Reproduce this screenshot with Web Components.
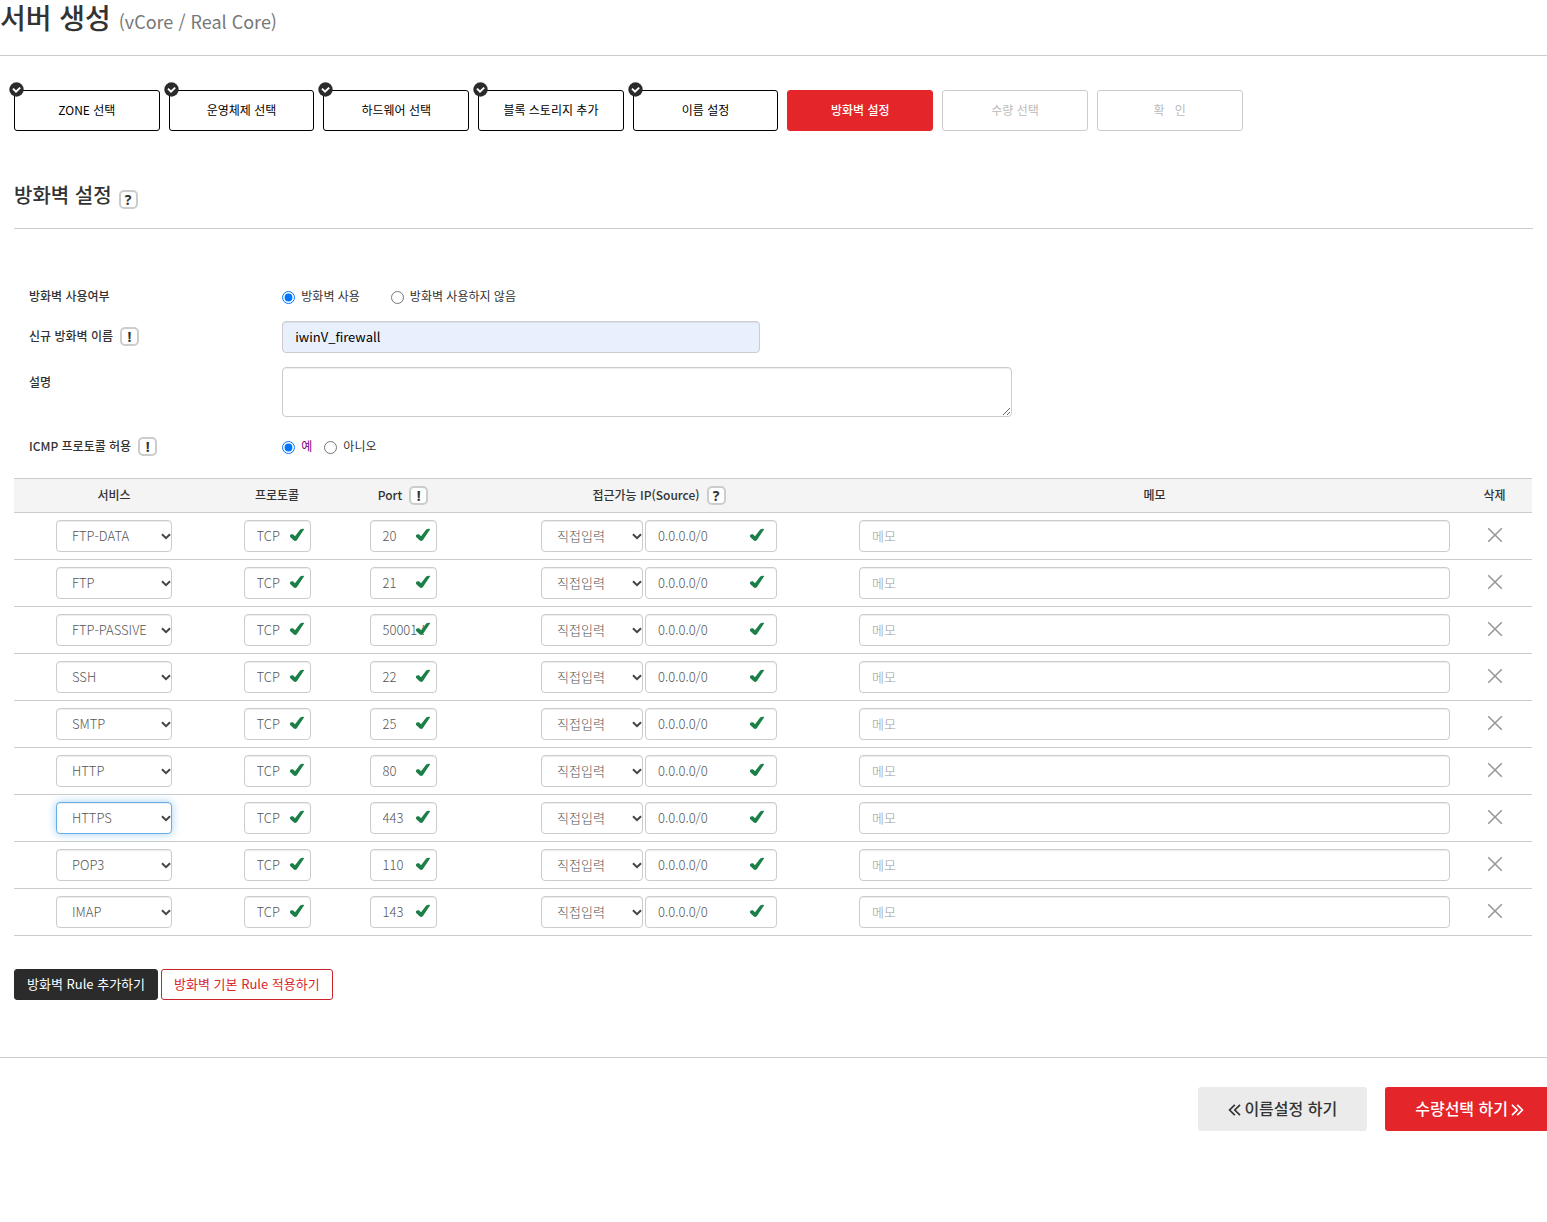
<!DOCTYPE html>
<html lang="ko">
<head>
<meta charset="utf-8">
<meta name="viewport" content="width=device-width, initial-scale=1">
<title>서버 생성</title>
<style>
  body {
    margin: 0;
    font-family: "Noto Sans CJK KR", "Noto Sans", sans-serif;
    font-size: 12px;
    line-height: 18px;
    color: #333;
    background-color: #fff;
  }
</style>
</head>
<body>
<server-create></server-create>

<script>
// bootstrap-like look shared by every text box and drop-down
const controlStyle = `
  * { box-sizing: border-box; }
  .control {
    height: 32px;
    margin: 0;
    padding: 0 12px 2px;
    border: 1px solid #ccc;
    border-radius: 4px;
    background-color: #fff;
    box-shadow: inset 0 1px 1px rgba(0,0,0,.075);
    color: #555;
    font-family: inherit;
    font-size: 13px;
    font-weight: 300;
  }
  .control::placeholder { color: #999; opacity: 1; }
  .control:focus, .control.active {
    outline: 0;
    border-color: #66afe9;
    box-shadow: inset 0 1px 1px rgba(0,0,0,.075), 0 0 8px rgba(102,175,233,.6);
  }
  select.control {
    appearance: none;
    padding: 0 12px 2px 15px;
    background-image: url("data:image/svg+xml,%3Csvg xmlns='http://www.w3.org/2000/svg' width='10' height='7' viewBox='0 0 10 7'%3E%3Cpath d='M1 1.2l4 4 4-4' fill='none' stroke='%23444' stroke-width='2'/%3E%3C/svg%3E");
    background-repeat: no-repeat;
    background-position: right center;
  }
`;

class PageHeader extends HTMLElement {
  connectedCallback() {
    this.attachShadow({ mode: "open" }).innerHTML = `
      <style>
        :host { display: block; height: 55px; border-bottom: 1px solid #ccc; }
        h1 {
          margin: 0;
          font-size: 28px;
          font-weight: 500;
          line-height: 34px;
        }
        small { font-size: 18px; font-weight: 400; color: #777; }
      </style>
      <h1><slot></slot> <small><slot name="sub"></slot></small></h1>`;
  }
}
customElements.define("page-header", PageHeader);

class StepItem extends HTMLElement {
  connectedCallback() {
    this.attachShadow({ mode: "open" }).innerHTML = `
      <style>
        :host {
          display: block;
          position: relative;
          box-sizing: border-box;
          height: 41px;
          border: 1px solid #ccc;
          border-radius: 3px;
          color: #bbb;
          line-height: 38px;
          text-align: center;
          white-space: nowrap;
        }
        :host([state="done"]) { border-color: #000; color: #000; }
        :host([state="current"]) {
          border-color: #e4252a;
          background-color: #e4252a;
          color: #fff;
          font-weight: 500;
        }
        svg { display: none; position: absolute; left: -6px; top: -9px; }
        :host([state="done"]) svg { display: block; }
      </style>
      <svg width="15" height="15" viewBox="0 0 15 15">
        <circle cx="7.5" cy="7.5" r="7.2" fill="#2b2b2b"/>
        <path d="M4 6.6l3 3 4.2-4" fill="none" stroke="#fff" stroke-width="2"/>
      </svg>
      <slot></slot>`;
  }
}
customElements.define("step-item", StepItem);

class StepBar extends HTMLElement {
  connectedCallback() {
    this.attachShadow({ mode: "open" }).innerHTML = `
      <style>
        :host {
          display: grid;
          grid-template-columns: repeat(8, 10vw);
          padding: 34px 0 0 14px;
        }
        ::slotted(*) { margin-right: 9px; }
      </style>
      <slot></slot>`;
  }
}
customElements.define("step-bar", StepBar);

// small rounded "?" / "!" hint
class HelpBadge extends HTMLElement {
  connectedCallback() {
    this.attachShadow({ mode: "open" }).innerHTML = `
      <style>
        :host { display: inline-block; vertical-align: middle; }
        button {
          display: block;
          box-sizing: border-box;
          width: 19px;
          height: 19px;
          padding: 0;
          border: 2px solid #ccc;
          border-radius: 5px;
          background-color: #fff;
          color: #333;
          font-family: "Noto Sans", sans-serif;
          font-size: 14px;
          font-weight: 700;
          line-height: 15px;
          text-align: center;
        }
      </style>
      <button type="button"><slot></slot></button>`;
  }
}
customElements.define("help-badge", HelpBadge);

class SectionTitle extends HTMLElement {
  connectedCallback() {
    this.attachShadow({ mode: "open" }).innerHTML = `
      <style>
        :host { display: block; border-bottom: 1px solid #ccc; padding-bottom: 19px; }
        h2 {
          display: flex;
          align-items: flex-end;
          gap: 7px;
          margin: 0;
          font-size: 20px;
          font-weight: 500;
          line-height: 28px;
        }
      </style>
      <h2><slot></slot><slot name="help"></slot></h2>`;
  }
}
customElements.define("section-title", SectionTitle);

class FormRow extends HTMLElement {
  connectedCallback() {
    this.attachShadow({ mode: "open" }).innerHTML = `
      <style>
        :host { --row-height: 30px; display: flex; align-items: flex-start; }
        :host([compact]) { --row-height: 23px; }
        .label {
          flex: 0 0 17%;
          display: flex;
          align-items: center;
          gap: 7px;
          min-height: var(--row-height);
          font-weight: 500;
        }
        .field { flex: 1; display: flex; align-items: center; min-height: var(--row-height); }
      </style>
      <div class="label"><slot name="label"></slot></div>
      <div class="field"><slot></slot></div>`;
  }
}
customElements.define("form-row", FormRow);

class FirewallForm extends HTMLElement {
  connectedCallback() {
    this.attachShadow({ mode: "open" }).innerHTML = `
      <style>
        ${controlStyle}
        :host { display: block; padding: 0 14px 0 15px; }
        form { display: flex; flex-direction: column; gap: 14px; }
        .choices { display: flex; gap: 31px; }
        .choices.tight { gap: 12px; }
        .choices label { display: flex; align-items: center; gap: 6px; }
        input[type=radio] { width: 13px; height: 13px; margin: 3px 0 0; }
        #name {
          width: 38.6%;
          background-color: #e8f0fe;
          color: #000;
          font-weight: 400;
        }
        textarea.control { display: block; width: 59%; height: 50px; }
        .on { color: #800080; }
      </style>
      <form>
        <form-row compact>
          <span slot="label">방화벽 사용여부</span>
          <div class="choices">
            <label><input type="radio" name="use" checked>방화벽 사용</label>
            <label><input type="radio" name="use">방화벽 사용하지 않음</label>
          </div>
        </form-row>
        <form-row>
          <label slot="label" for="name">신규 방화벽 이름</label>
          <help-badge slot="label">!</help-badge>
          <input class="control" id="name" type="text" value="iwinV_firewall">
        </form-row>
        <form-row>
          <label slot="label" for="desc">설명</label>
          <textarea class="control" id="desc"></textarea>
        </form-row>
        <form-row>
          <span slot="label">ICMP 프로토콜 허용</span>
          <help-badge slot="label">!</help-badge>
          <div class="choices tight">
            <label><input type="radio" name="icmp" checked><span class="on">예</span></label>
            <label><input type="radio" name="icmp">아니오</label>
          </div>
        </form-row>
      </form>`;
  }
}
customElements.define("firewall-form", FirewallForm);

// text box with the green "valid" tick lying over its right end
class CheckedInput extends HTMLElement {
  connectedCallback() {
    this.attachShadow({ mode: "open" }).innerHTML = `
      <style>
        ${controlStyle}
        :host { display: inline-block; position: relative; width: 67px; vertical-align: top; text-align: left; }
        :host([wide]) { width: 132px; }
        .control { display: block; width: 100%; }
        svg { position: absolute; right: 6px; top: 8px; }
        :host([wide]) svg { right: 12px; }
      </style>
      <input class="control" type="text" value="${this.getAttribute("value")}" aria-label="${this.getAttribute("label")}">
      <svg width="16" height="14" viewBox="0 0 16 14">
        <path d="M.9 7.6Q1.8 5.8 4 6.3L6 8.2 11.2 1.4Q13.4.2 15.3 1L7.8 12.2Q6.2 13.6 4.6 12.2L1.1 8.9z" fill="#1c7f48"/>
      </svg>`;
  }
}
customElements.define("checked-input", CheckedInput);

const rules = [
  ["FTP-DATA", "20"],
  ["FTP", "21"],
  ["FTP-PASSIVE", "50001-50005"],
  ["SSH", "22"],
  ["SMTP", "25"],
  ["HTTP", "80"],
  ["HTTPS", "443"],
  ["POP3", "110"],
  ["IMAP", "143"]
];

class RuleTable extends HTMLElement {
  connectedCallback() {
    this.attachShadow({ mode: "open" }).innerHTML = `
      <style>
        ${controlStyle}
        :host { display: block; padding-right: 1px; }
        table {
          width: 100%;
          table-layout: fixed;
          border-collapse: collapse;
          border-top: 1px solid #ccc;
        }
        tr { border-bottom: 1px solid #ccc; }
        th {
          height: 34px;
          padding: 0 0 2px;
          background-color: #f4f4f4;
          font-weight: 500;
        }
        .head { display: flex; align-items: center; justify-content: center; gap: 7px; }
        .head help-badge { padding-top: 2px; }
        td { padding: 7px; text-align: center; line-height: 0; }
        .service { width: 116px; }
        .ip { display: flex; justify-content: center; gap: 2px; }
        .ip select { width: 102px; }
        .memo { width: 100%; }
        .delete {
          padding: 0 0 2px;
          border: 0;
          background: none;
          line-height: 0;
          cursor: pointer;
        }
        col.service-col { width: 200px; }
        col.small-col { width: 126px; }
        col.ip-col { width: 386px; }
        col.delete-col { width: 75px; }
      </style>
      <table>
        <colgroup>
          <col class="service-col"><col class="small-col"><col class="small-col">
          <col class="ip-col"><col><col class="delete-col">
        </colgroup>
        <thead>
          <tr>
            <th>서비스</th>
            <th>프로토콜</th>
            <th><div class="head">Port <help-badge>!</help-badge></div></th>
            <th><div class="head">접근가능 IP(Source) <help-badge>?</help-badge></div></th>
            <th>메모</th>
            <th>삭제</th>
          </tr>
        </thead>
        <tbody>${rules.map(r => this.row(r)).join("")}</tbody>
      </table>`;
  }

  row([service, port]) {
    const options = rules.map(([name]) => `<option${name === service ? " selected" : ""}>${name}</option>`).join("");
    return `
      <tr>
        <td><select class="control service${service === "HTTPS" ? " active" : ""}" aria-label="서비스">${options}</select></td>
        <td><checked-input value="TCP" label="프로토콜"></checked-input></td>
        <td><checked-input value="${port}" label="Port"></checked-input></td>
        <td>
          <div class="ip">
            <select class="control" aria-label="접근가능 IP"><option>직접입력</option></select>
            <checked-input wide value="0.0.0.0/0" label="Source"></checked-input>
          </div>
        </td>
        <td><input class="control memo" type="text" placeholder="메모" aria-label="메모"></td>
        <td>
          <button class="delete" type="button" aria-label="삭제">
            <svg width="16" height="16" viewBox="0 0 16 16"><path d="M1.2 1.2l13.6 13.6M14.8 1.2L1.2 14.8" stroke="#999" stroke-width="1.6"/></svg>
          </button>
        </td>
      </tr>`;
  }
}
customElements.define("rule-table", RuleTable);

class RuleButton extends HTMLElement {
  connectedCallback() {
    this.attachShadow({ mode: "open" }).innerHTML = `
      <style>
        :host { display: block; }
        button {
          display: block;
          height: 31px;
          padding: 0 12px 2px;
          border: 1px solid #2b2b2b;
          border-radius: 3px;
          background-color: #2b2b2b;
          color: #fff;
          font-family: inherit;
          font-size: 13px;
          line-height: 26px;
          cursor: pointer;
        }
        :host([outline]) button {
          border-color: #c9252b;
          background-color: #fff;
          color: #d9252b;
        }
      </style>
      <button type="button"><slot></slot></button>`;
  }
}
customElements.define("rule-button", RuleButton);

class NavButton extends HTMLElement {
  connectedCallback() {
    this.attachShadow({ mode: "open" }).innerHTML = `
      <style>
        :host { display: block; }
        button {
          display: flex;
          align-items: center;
          gap: 3px;
          height: 44px;
          padding: 0 30px 2px;
          border: 0;
          border-radius: 3px;
          background-color: #ebebeb;
          color: #333;
          font-family: inherit;
          font-size: 16px;
          font-weight: 500;
          line-height: 24px;
          white-space: nowrap;
          cursor: pointer;
        }
        :host([next]) button { flex-direction: row-reverse; background-color: #e4252a; color: #fff; }
        :host([next]) svg { transform: scaleX(-1); }
      </style>
      <button type="button">
        <svg width="13" height="16" viewBox="0 0 13 16">
          <path d="M6.8 4.8L1.6 10l5.2 5.2M12 4.8L6.8 10l5.2 5.2" fill="none" stroke="currentColor" stroke-width="1.7"/>
        </svg>
        <span><slot></slot></span>
      </button>`;
  }
}
customElements.define("nav-button", NavButton);

class ServerCreate extends HTMLElement {
  connectedCallback() {
    this.attachShadow({ mode: "open" }).innerHTML = `
      <style>
        :host { display: block; }
        main { padding: 50px 14px 57px; }
        firewall-form { margin-top: 55px; }
        rule-table { margin-top: 17px; }
        .actions { display: flex; gap: 3px; margin-top: 33px; }
        /* the last button runs past the right edge of the page */
        footer {
          display: flex;
          justify-content: flex-end;
          gap: 18px;
          padding-top: 29px;
          border-top: 1px solid #ccc;
          overflow: hidden;
        }
        footer nav-button:last-child { margin-right: -7px; }
      </style>
      <page-header>서버 생성<span slot="sub">(vCore / Real Core)</span></page-header>
      <step-bar>
        <step-item state="done">ZONE 선택</step-item>
        <step-item state="done">운영체제 선택</step-item>
        <step-item state="done">하드웨어 선택</step-item>
        <step-item state="done">블록 스토리지 추가</step-item>
        <step-item state="done">이름 설정</step-item>
        <step-item state="current">방화벽 설정</step-item>
        <step-item>수량 선택</step-item>
        <step-item>확 &nbsp; 인</step-item>
      </step-bar>
      <main>
        <section-title>방화벽 설정<help-badge slot="help">?</help-badge></section-title>
        <firewall-form></firewall-form>
        <rule-table></rule-table>
        <div class="actions">
          <rule-button>방화벽 Rule 추가하기</rule-button>
          <rule-button outline>방화벽 기본 Rule 적용하기</rule-button>
        </div>
      </main>
      <footer>
        <nav-button>이름설정 하기</nav-button>
        <nav-button next>수량선택 하기</nav-button>
      </footer>`;
  }
}
customElements.define("server-create", ServerCreate);
</script>
</body>
</html>
